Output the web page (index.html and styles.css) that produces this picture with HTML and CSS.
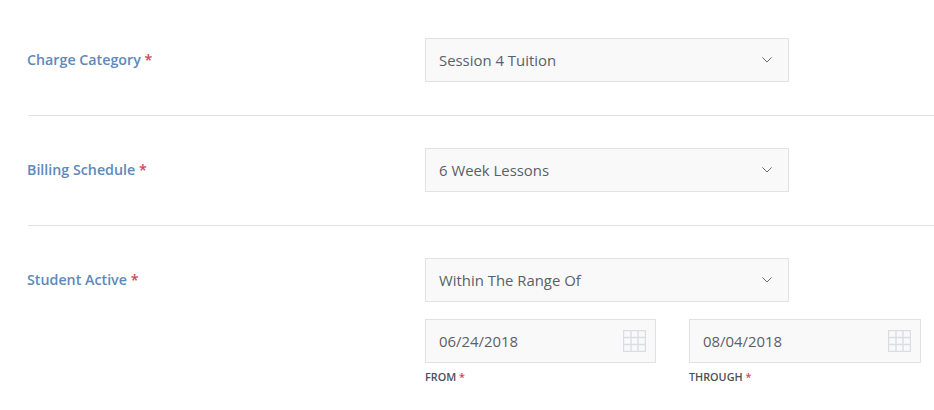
FILE: index.html
```html
<!DOCTYPE html>
<html>
    <head>
        <title>Charge Settings</title>
        <link rel="stylesheet" href="styles.css">
    </head>
    <body>
        <div class="formRow">
            <label class="rowLabel">Charge Category <span class="req">*</span></label>
            <div class="rowField">
                <div class="selectBox">
                    <span>Session 4 Tuition</span>
                    <svg width="10" height="6" viewBox="0 0 10 6"><path d="M.4.4L5 5 9.600.4" fill="none" stroke="#6b6b6b" stroke-width="1"/></svg>
                </div>
            </div>
        </div>
        <div class="formRow">
            <label class="rowLabel">Billing Schedule <span class="req">*</span></label>
            <div class="rowField">
                <div class="selectBox">
                    <span>6 Week Lessons</span>
                    <svg width="10" height="6" viewBox="0 0 10 6"><path d="M.4.4L5 5 9.600.4" fill="none" stroke="#6b6b6b" stroke-width="1"/></svg>
                </div>
            </div>
        </div>
        <div class="formRow lastRow">
            <label class="rowLabel">Student Active <span class="req">*</span></label>
            <div class="rowField">
                <div class="selectBox">
                    <span>Within The Range Of</span>
                    <svg width="10" height="6" viewBox="0 0 10 6"><path d="M.4.4L5 5 9.600.4" fill="none" stroke="#6b6b6b" stroke-width="1"/></svg>
                </div>
                <div class="dateRow">
                    <div>
                        <div class="dateBox">
                            <span>06/24/2018</span>
                            <svg width="23" height="22" viewBox="0 0 23 22"><path d="M.5 0v22M8 0v22M15 0v22M22.500 0v22M0 .5h23M0 7.500h23M0 14.500h23M0 21.500h23" fill="none" stroke="#dcdde2" stroke-width="1.4"/></svg>
                        </div>
                        <label class="dateLabel">FROM <span class="req">*</span></label>
                    </div>
                    <div>
                        <div class="dateBox">
                            <span>08/04/2018</span>
                            <svg width="23" height="22" viewBox="0 0 23 22"><path d="M.5 0v22M8 0v22M15 0v22M22.500 0v22M0 .5h23M0 7.500h23M0 14.500h23M0 21.500h23" fill="none" stroke="#dcdde2" stroke-width="1.4"/></svg>
                        </div>
                        <label class="dateLabel">THROUGH <span class="req">*</span></label>
                    </div>
                </div>
            </div>
        </div>
    </body>
</html>
```

FILE: styles.css
```css
body {
    margin: 0;
    padding-left: 28px;
    background-color: white;
    font-family: "Open Sans", sans-serif;
    overflow: hidden;
}

.formRow {
    display: flex;
    padding: 32px 0 33px;
    border-bottom: 1px solid #e2e2e2;
}

.formRow:first-child {
    padding-top: 38px;
}

.lastRow {
    border-bottom: none;
    padding-bottom: 0;
}

.rowLabel {
    width: 398px;
    margin-left: -1px;
    padding-top: 12px;
    font-size: 14.25px;
    line-height: 19px;
    font-weight: 600;
    color: #5e89ba;
}

.req {
    color: #d2455c;
}

.rowField {
    width: 496px;
}

.selectBox {
    display: flex;
    justify-content: space-between;
    align-items: center;
    box-sizing: border-box;
    width: 364px;
    height: 44px;
    padding: 0 16px 0 13px;
    background-color: #f9f9f9;
    border: 1px solid #e2e2e2;
    font-size: 14.9px;
    color: #5a5f69;
}

.dateRow {
    display: grid;
    grid-template-columns: 231px 232px;
    gap: 33px;
    margin-top: 17px;
}

.dateBox {
    display: flex;
    justify-content: space-between;
    align-items: center;
    box-sizing: border-box;
    height: 44px;
    padding: 0 9px 0 13px;
    background-color: #f9f9f9;
    border: 1px solid #e2e2e2;
    font-size: 14.9px;
    color: #5a5f69;
}

.dateLabel {
    display: block;
    margin-top: 6px;
    font-size: 10.8px;
    line-height: 16px;
    font-weight: 600;
    color: #4a4f59;
}
```
